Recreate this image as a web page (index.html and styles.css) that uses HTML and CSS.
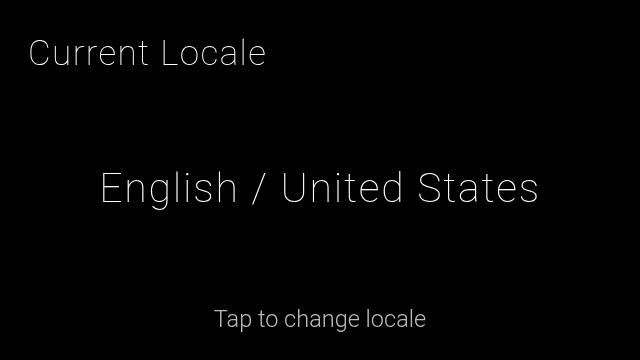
FILE: index.html
```html
<!DOCTYPE html>
<html>
<head>
<meta charset="utf-8">
<link rel="stylesheet" href="styles.css">
</head>
<body>
<div class="card">
  <div class="title">Current Locale</div>
  <div class="main">English / United States</div>
  <div class="footer">Tap to change locale</div>
</div>
</body>
</html>
```
FILE: styles.css
```css
html, body {
  margin: 0;
  padding: 0;
  background: #000;
}
.card {
  width: 640px;
  height: 360px;
  box-sizing: border-box;
  display: flex;
  flex-direction: column;
  color: #fff;
  font-family: Roboto, "Liberation Sans", sans-serif;
  will-change: transform;
}
.title {
  font-size: 35px;
  font-weight: 100;
  letter-spacing: 1.4px;
  padding: 34px 0 0 28px;
  line-height: 40px;
}
.main {
  font-size: 41px;
  font-weight: 100;
  letter-spacing: 1.8px;
  text-align: center;
  margin-top: 90px;
  line-height: 48px;
}
.footer {
  font-size: 23.5px;
  font-weight: 300;
  color: #bbb;
  text-align: center;
  margin-top: auto;
  margin-bottom: 27px;
  line-height: 28px;
}
```
